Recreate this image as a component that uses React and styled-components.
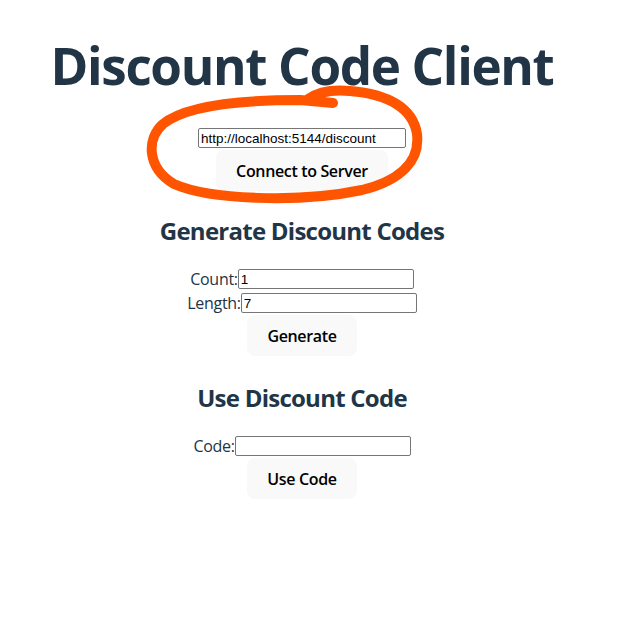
import React, { useState } from 'react';
import styled, { createGlobalStyle } from 'styled-components';

const GlobalStyle = createGlobalStyle`
  body {
    margin: 0;
    background: #ffffff;
    color: #213547;
    font-family: "Open Sans", "Noto Sans", sans-serif;
    font-size: 16px;
    line-height: 1.5;
  }
`;

const Page = styled.div`
  position: relative;
  width: 632px;
  min-height: 619px;
`;

const Main = styled.main`
  width: 604px;
  display: flex;
  flex-direction: column;
  align-items: center;
`;

const Title = styled.h1`
  margin: 37px 0 0;
  font-size: 51.2px;
  line-height: 1.1;
  font-weight: 700;
  letter-spacing: -1.35px;
`;

const ServerBox = styled.div`
  margin-top: 35px;
  display: flex;
  flex-direction: column;
  align-items: center;
  gap: 2px;
`;

const Heading = styled.h2`
  margin: ${(p) => p.$top || 22}px 0 18px;
  font-size: 24px;
  line-height: 36px;
  font-weight: 700;
  letter-spacing: -0.75px;
`;

const Section = styled.section`
  display: flex;
  flex-direction: column;
  align-items: center;
`;

const FieldRow = styled.div`
  height: 24px;
  display: flex;
  align-items: center;
  justify-content: center;
`;

const Label = styled.label`
  font-size: 16px;
  color: #213547;
  letter-spacing: -0.3px;
`;

const TextInput = styled.input`
  box-sizing: border-box;
  width: ${(p) => p.$width || 176}px;
  height: 20px;
  padding: 1px 2px;
  border: 1px solid #767676;
  border-radius: 2px;
  font-family: "Liberation Sans", Arial, sans-serif;
  font-size: 13.5px;
  color: #000000;
  background: #ffffff;
  outline: none;
`;

const Button = styled.button`
  box-sizing: border-box;
  height: 41px;
  padding: 0 19px;
  border: 1px solid transparent;
  border-radius: 8px;
  background: #f9f9f9;
  color: #000000;
  font-family: inherit;
  font-size: 16px;
  font-weight: 600;
  letter-spacing: -0.35px;
  cursor: pointer;
`;

const Scribble = styled.svg`
  position: absolute;
  left: 0;
  top: 0;
  pointer-events: none;
`;

function Annotation() {
  return (
    <Scribble width="632" height="619" viewBox="0 0 632 619">
      <path
        d="M 333 103 L 300 100 C 240 100 185 106 163 124 C 146 139 147 168 174 184 C 210 200 300 203 362 190 C 402 180 420 160 417 134 C 413 108 388 94 350 91 C 330 89 318 92 308 99"
        fill="none"
        stroke="#ff5500"
        strokeWidth="10"
        strokeLinecap="round"
        strokeLinejoin="round"
      />
    </Scribble>
  );
}

export default function App() {
  const [url, setUrl] = useState('http://localhost:5144/discount');
  const [count, setCount] = useState('1');
  const [length, setLength] = useState('7');
  const [code, setCode] = useState('');

  return (
    <Page>
      <GlobalStyle />
      <Main>
        <Title>Discount Code Client</Title>
        <ServerBox>
          <TextInput $width={208} value={url} onChange={(e) => setUrl(e.target.value)} />
          <Button>Connect to Server</Button>
        </ServerBox>

        <Section>
          <Heading $top={22}>Generate Discount Codes</Heading>
          <FieldRow>
            <Label>Count:</Label>
            <TextInput value={count} onChange={(e) => setCount(e.target.value)} />
          </FieldRow>
          <FieldRow>
            <Label>Length:</Label>
            <TextInput value={length} onChange={(e) => setLength(e.target.value)} />
          </FieldRow>
          <Button>Generate</Button>
        </Section>

        <Section>
          <Heading $top={24}>Use Discount Code</Heading>
          <FieldRow>
            <Label>Code:</Label>
            <TextInput value={code} onChange={(e) => setCode(e.target.value)} />
          </FieldRow>
          <Button>Use Code</Button>
        </Section>
      </Main>
      <Annotation />
    </Page>
  );
}
